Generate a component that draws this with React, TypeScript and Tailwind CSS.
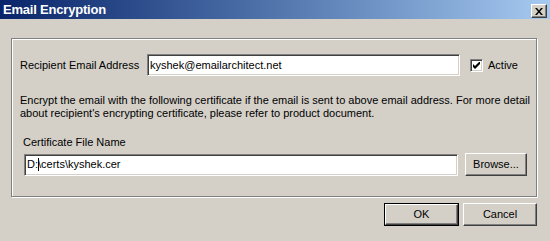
import React from "react";

const font = { fontFamily: '"Liberation Sans", Arial, sans-serif' };

function Sunken({ className = "", children }: { className?: string; children?: React.ReactNode }) {
  return (
    <div
      className={
        "bg-white border-t border-l border-t-[#808080] border-l-[#808080] border-b border-r border-b-white border-r-white shadow-[inset_1px_1px_0_#404040,inset_-1px_-1px_0_#D4D0C8] flex items-center " +
        className
      }
    >
      {children}
    </div>
  );
}

function Btn({ className = "", children }: { className?: string; children?: React.ReactNode }) {
  return (
    <div
      className={
        "bg-[#D4D0C8] border-t border-l border-t-white border-l-white border-b border-r border-b-[#404040] border-r-[#404040] shadow-[inset_-1px_-1px_0_#808080] flex items-center justify-center text-[11px] text-black " +
        className
      }
    >
      {children}
    </div>
  );
}

export default function App() {
  return (
    <div className="w-[550px] h-[241px] bg-[#D4D0C8] overflow-hidden flex flex-col text-black" style={font}>
      <div className="h-[19px] bg-gradient-to-r from-[#0A246A] to-[#A6CAF0] flex justify-between pl-[3px] pr-[3px]">
        <span className="text-white font-bold text-[13px] leading-[19px] tracking-[-0.2px]">Email Encryption</span>
        <div className="mt-[4px] w-[16px] h-[14px] bg-[#D4D0C8] border-t border-l border-t-white border-l-white border-b border-r border-b-[#404040] border-r-[#404040] shadow-[inset_-1px_-1px_0_#808080] flex items-center justify-center">
          <svg width="8" height="7" viewBox="0 0 8 7">
            <path d="M0 0h2l2 2.5L6 0h2L5 3.5 8 7H6L4 4.5 2 7H0l3-3.5z" fill="#000" />
          </svg>
        </div>
      </div>

      <div className="ml-[11px] mt-[19px] w-[526px] h-[159px] border border-[#808080] shadow-[1px_1px_0_white,inset_1px_1px_0_white] pl-[8px] pt-[15px] text-[11px]">
        <div className="flex items-center h-[22px]">
          <span className="w-[127px] leading-[13px]">Recipient Email Address</span>
          <Sunken className="w-[313px] h-[22px] pl-[2px]">
            <span className="leading-[13px]">kyshek@emailarchitect.net</span>
          </Sunken>
          <div className="ml-[10px] w-[13px] h-[13px] bg-white border-t border-l border-t-[#808080] border-l-[#808080] border-b border-r border-b-white border-r-white shadow-[inset_1px_1px_0_#404040,inset_-1px_-1px_0_#D4D0C8] flex items-center justify-center">
            <svg width="7" height="7" viewBox="0 0 7 7">
              <path d="M0 2v3l2 2 5-5V-1L2 4z" fill="#000" />
            </svg>
          </div>
          <span className="ml-[5px] leading-[13px]">Active</span>
        </div>

        <p className="mt-[18px] leading-[13px] w-[510px]">
          Encrypt the email with the following certificate if the email is sent to above email address. For more detail about recipient's encrypting certificate, please refer to product document.
        </p>

        <div className="mt-[16px] ml-[3px] leading-[13px]">Certificate File Name</div>

        <div className="mt-[4px] flex items-center h-[23px] ml-[4px]">
          <Sunken className="w-[434px] h-[22px] pl-[2px]">
            <span className="leading-[13px] whitespace-pre">D:</span>
            <span className="inline-block w-px h-[13px] bg-black -mr-px"></span>
            <span className="leading-[13px] whitespace-pre">{"\\certs\\kyshek.cer"}</span>
          </Sunken>
          <Btn className="ml-[7px] w-[62px] h-[23px]">Browse...</Btn>
        </div>
      </div>

      <div className="mt-[6px] flex justify-end gap-[4px] w-[537px]">
        <div className="w-[75px] h-[23px] border border-black">
          <Btn className="w-full h-full">OK</Btn>
        </div>
        <Btn className="w-[74px] h-[23px]">Cancel</Btn>
      </div>
    </div>
  );
}
